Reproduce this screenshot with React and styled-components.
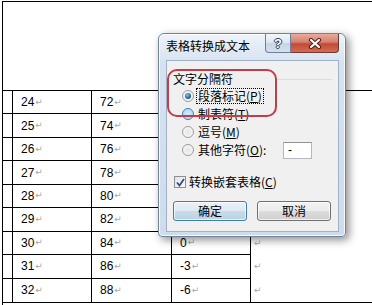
import React from "react";
import styled, { createGlobalStyle } from "styled-components";

const GlobalStyle = createGlobalStyle`
  html, body {
    margin: 0;
    padding: 0;
    background: #fff;
  }
  body {
    font-family: "Liberation Sans", Arial, sans-serif;
  }
`;

const Page = styled.div`
  position: relative;
  width: 372px;
  height: 305px;
  overflow: hidden;
  background: #fff;
`;

const Sheet = styled.div`
  margin: 1px 0 0 2px;
  height: 304px;
  box-sizing: border-box;
  border-top: 1px solid #000;
  border-left: 1px solid #000;
  padding-top: 88px;
`;

const Table = styled.div`
  border-top: 1px solid #000;
  border-bottom: 1px solid #000;
`;

const Row = styled.div`
  display: grid;
  grid-template-columns: 10px 79px 80px 79px 1fr;
  height: 23.45px;
`;

const Cell = styled.div`
  box-sizing: border-box;
  border-right: 1px solid #000;
  border-bottom: ${(p) => (p.$last ? "none" : "1px solid #000")};
  padding-left: ${(p) => (p.$narrow ? "0" : "8px")};
  display: flex;
  align-items: center;
  font-size: 12px;
  color: #000;
`;

const EndCell = styled.div`
  display: flex;
  align-items: center;
  padding-left: 2px;
`;

const Mark = styled.span`
  font-family: "DejaVu Sans", sans-serif;
  font-size: 9px;
  color: #a8a8a8;
  margin-left: 1px;
  line-height: 1;
`;

const Dialog = styled.div`
  position: absolute;
  left: 158px;
  top: 33px;
  width: 188px;
  height: 204px;
  box-sizing: border-box;
  border: 1px solid #70839c;
  border-radius: 6px 6px 4px 4px;
  background: linear-gradient(#edf3fa, #d6e2f0 30px, #cfdcec);
  box-shadow: inset 0 0 0 1px rgba(255, 255, 255, 0.8),
    3px 3px 8px rgba(0, 0, 0, 0.45);
  padding: 0 6px 4px 7px;
  display: flex;
  flex-direction: column;
  font-family: "Noto Sans CJK SC", "Liberation Sans", sans-serif;
  font-size: 12px;
  color: #000;
`;

const TitleBar = styled.div`
  height: 26px;
  display: flex;
  align-items: flex-start;
`;

const Title = styled.div`
  padding-top: 4px;
  line-height: 16px;
`;

const Caption = styled.div`
  margin-left: auto;
  display: flex;
`;

const HelpButton = styled.div`
  width: 26px;
  height: 19px;
  box-sizing: border-box;
  border: 1px solid #6b7f9a;
  border-top: none;
  border-radius: 0 0 0 4px;
  background: linear-gradient(#f3f6fa, #dde6f1 50%, #c8d5e5 51%, #d5e0ec);
  display: flex;
  align-items: center;
  justify-content: center;
  font-family: "Liberation Sans", sans-serif;
  font-weight: bold;
  font-size: 13px;
  color: #fff;
  text-shadow: 0 0 1px #2f3f58, 1px 0 0 #2f3f58, -1px 0 0 #2f3f58,
    0 1px 0 #2f3f58, 0 -1px 0 #2f3f58;
`;

const CloseButton = styled.div`
  width: 48px;
  height: 19px;
  box-sizing: border-box;
  border: 1px solid #6c3a34;
  border-top: none;
  border-left: none;
  border-radius: 0 0 4px 0;
  background: linear-gradient(#e9ab9c, #d7806f 45%, #c24a36 55%, #d66a52);
  display: flex;
  align-items: center;
  justify-content: center;
`;

const Panel = styled.div`
  flex: 1;
  background: #f0f0f0;
  border: 1px solid #9fb1c8;
  padding: 10px 0 0 6px;
`;

const Legend = styled.div`
  display: flex;
  align-items: center;
  height: 16px;
  line-height: 16px;
`;

const GroupLine = styled.div`
  flex: 1;
  margin: 0 6px 0 44px;
  border-top: 1px solid #d5dde5;
`;

const Options = styled.div`
  padding-left: 9px;
`;

const OptionRow = styled.div`
  display: flex;
  align-items: center;
  height: 18px;
  gap: 2px;
`;

const Radio = styled.span`
  flex: none;
  width: 12px;
  height: 12px;
  box-sizing: border-box;
  border-radius: 50%;
  border: 1px solid ${(p) => (p.$hover ? "#3c7fb1" : "#9c9c9c")};
  background: ${(p) =>
    p.$hover
      ? "radial-gradient(circle at 50% 50%, #d6effc 0, #b6dcf3 60%, #e9f6fd 100%)"
      : "radial-gradient(circle at 50% 50%, #e6e6e6 0, #f0f0f0 50%, #fdfdfd 100%)"};
  display: flex;
  align-items: center;
  justify-content: center;

  &::after {
    content: "";
    display: ${(p) => (p.$checked ? "block" : "none")};
    width: 6px;
    height: 6px;
    border-radius: 50%;
    background: radial-gradient(circle at 40% 35%, #8fc2ea 0, #2b6aa3 55%, #173f6a 100%);
  }
`;

const OptionLabel = styled.span`
  box-sizing: border-box;
  border: 1px ${(p) => (p.$focus ? "dotted #000" : "solid transparent")};
  padding: 0 1px;
  line-height: 14px;
  white-space: nowrap;
  width: ${(p) => p.$w || "auto"};

  u {
    text-decoration: underline;
  }
`;

const TextBox = styled.div`
  width: 29px;
  height: 17px;
  box-sizing: border-box;
  border: 1px solid #b5b8be;
  border-top-color: #8e9299;
  background: #fff;
  padding-left: 4px;
  font-family: "Liberation Sans", sans-serif;
  font-size: 12px;
  line-height: 15px;
`;

const CheckRow = styled.div`
  display: flex;
  align-items: center;
  height: 18px;
  gap: 1px;
  margin-top: 14px;
  padding-left: 1px;
`;

const CheckBox = styled.span`
  flex: none;
  width: 12px;
  height: 12px;
  box-sizing: border-box;
  border: 1px solid #8f8f8f;
  background: linear-gradient(135deg, #e3e3e3, #fafafa);
  display: flex;
  align-items: center;
  justify-content: center;
`;

const Buttons = styled.div`
  display: flex;
  gap: 10px;
  margin-top: 10px;
`;

const Button = styled.div`
  width: 74px;
  height: 20px;
  box-sizing: border-box;
  border: 1px solid ${(p) => (p.$default ? "#3c7fb1" : "#707070")};
  border-radius: 3px;
  background: ${(p) =>
    p.$default
      ? "linear-gradient(#eaf2f8, #dce9f2 50%, #c9dbe8 51%, #bcd2e2)"
      : "linear-gradient(#f2f2f2, #ebebeb 50%, #dddddd 51%, #cfcfcf)"};
  box-shadow: inset 0 0 0 1px rgba(255, 255, 255, 0.7);
  display: flex;
  align-items: center;
  justify-content: center;
  line-height: 16px;
`;

const Annotation = styled.div`
  position: absolute;
  left: 167px;
  top: 69px;
  width: 110px;
  height: 48px;
  box-sizing: border-box;
  border: 2px solid #c23d4a;
  border-radius: 10px;
`;

// the fourth column and the row ends of the first six rows lie under the dialog
const rows = Array.from({ length: 9 }, (_, i) => ({
  a: 24 + i,
  b: 72 + i * 2,
  c: 18 - i * 3,
  shown: i >= 6,
}));

function CloseIcon() {
  return (
    <svg width="14" height="11" viewBox="0 0 14 11">
      <path d="M3 2 L11 9 M11 2 L3 9" stroke="#5b1d14" strokeWidth="4.2" strokeLinecap="round" />
      <path d="M3 2 L11 9 M11 2 L3 9" stroke="#fff" strokeWidth="2.2" strokeLinecap="round" />
    </svg>
  );
}

function CheckIcon() {
  return (
    <svg width="9" height="9" viewBox="0 0 9 9">
      <path d="M1 4.5 L3.5 7.5 L8 1" fill="none" stroke="#2a4f8c" strokeWidth="1.8" />
    </svg>
  );
}

export default function App() {
  return (
    <Page>
      <GlobalStyle />
      <Sheet>
        <Table>
          {rows.map((r, i) => {
            const last = i === rows.length - 1;
            return (
              <Row key={r.a}>
                <Cell $narrow $last={last} />
                <Cell $last={last}>
                  {r.a}
                  <Mark>↵</Mark>
                </Cell>
                <Cell $last={last}>
                  {r.b}
                  <Mark>↵</Mark>
                </Cell>
                <Cell $last={last}>
                  {r.shown && (
                    <>
                      {r.c}
                      <Mark>↵</Mark>
                    </>
                  )}
                </Cell>
                <EndCell>{r.shown && <Mark>↵</Mark>}</EndCell>
              </Row>
            );
          })}
        </Table>
      </Sheet>

      <Dialog>
        <TitleBar>
          <Title>表格转换成文本</Title>
          <Caption>
            <HelpButton>?</HelpButton>
            <CloseButton>
              <CloseIcon />
            </CloseButton>
          </Caption>
        </TitleBar>
        <Panel>
          <Legend>
            文字分隔符
            <GroupLine />
          </Legend>
          <Options>
            <OptionRow>
              <Radio $checked />
              <OptionLabel $focus>
                段落标记(<u>P</u>)
              </OptionLabel>
            </OptionRow>
            <OptionRow>
              <Radio $hover />
              <OptionLabel>
                制表符(<u>T</u>)
              </OptionLabel>
            </OptionRow>
            <OptionRow>
              <Radio />
              <OptionLabel>
                逗号(<u>M</u>)
              </OptionLabel>
            </OptionRow>
            <OptionRow>
              <Radio />
              <OptionLabel $w="85px">
                其他字符(<u>O</u>):
              </OptionLabel>
              <TextBox>-</TextBox>
            </OptionRow>
          </Options>
          <CheckRow>
            <CheckBox>
              <CheckIcon />
            </CheckBox>
            <OptionLabel>
              转换嵌套表格(<u>C</u>)
            </OptionLabel>
          </CheckRow>
          <Buttons>
            <Button $default>确定</Button>
            <Button>取消</Button>
          </Buttons>
        </Panel>
      </Dialog>

      <Annotation />
    </Page>
  );
}
